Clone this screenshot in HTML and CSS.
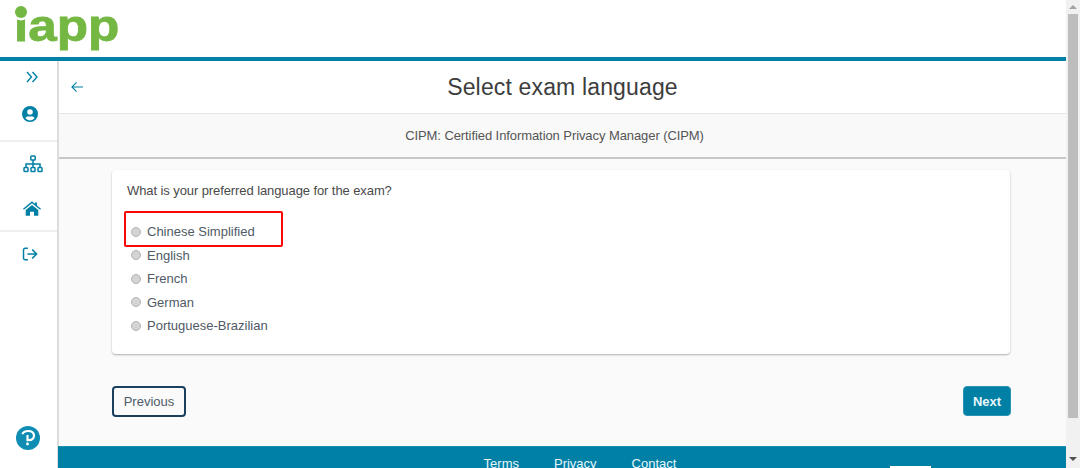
FILE: index.html
```html
<!DOCTYPE html>
<html lang="en">
<head>
<meta charset="utf-8">
<title>Select exam language</title>
<link rel="stylesheet" href="styles.css">
</head>
<body>
<div class="page">
  <header class="topbar">
    <div class="logo"><span class="logo-text">iapp</span><span class="logo-dot"></span></div>
  </header>
  <div class="main">
    <nav class="sidebar">
      <div class="nav-group nav-first">
        <svg class="ico chev" viewBox="0 0 12 12"><path d="M1 1l4.500 5L1 11M6.500 1l4.500 5-4.500 5" fill="none" stroke="currentColor" stroke-width="1.400"/></svg>
        <svg class="ico user" viewBox="0 0 16 16"><path fill-rule="evenodd" d="M8 0a8 8 0 1 1 0 16A8 8 0 0 1 8 0zm0 3.200a2.800 2.800 0 1 0 0 5.600 2.800 2.800 0 0 0 0-5.600zM3.400 12.300A5.800 5.800 0 0 0 8 14.400a5.800 5.800 0 0 0 4.600-2.100c-.6-1.300-1.700-2-3-2-.5 0-.9.300-1.600.3s-1.100-.3-1.600-.3c-1.300 0-2.400.7-3 2z" fill="currentColor"/></svg>
      </div>
      <div class="nav-group nav-second">
        <svg class="ico org" viewBox="0 0 20 18"><g fill="none" stroke="currentColor" stroke-width="1.500"><rect x="7.800" y="1" width="4.400" height="4" rx=".8"/><rect x="1" y="12.500" width="4" height="4" rx=".8"/><rect x="8" y="12.500" width="4" height="4" rx=".8"/><rect x="15" y="12.500" width="4" height="4" rx=".8"/><path d="M10 5v7.500M3 12.500V9h14v3.500"/></g></svg>
        <svg class="ico home" viewBox="0 0 20 16"><path d="M10 0l3.200 2.700V1.200h2.300v3.400L20 8.200l-1 1.200-9-7.300-9 7.300-1-1.200zM3 9.600L10 4l7 5.600V16h-4.800v-4.500H7.800V16H3z" fill="currentColor"/></svg>
      </div>
      <div class="nav-group nav-third">
        <svg class="ico exit" viewBox="0 0 18 16"><g fill="none" stroke="currentColor" stroke-width="1.700"><path d="M6 1.500H2.800A1.800 1.800 0 0 0 1 3.300v9.400a1.800 1.800 0 0 0 1.800 1.800H6"/><path d="M5.500 8H16M11 3l5 5-5 5"/></g></svg>
      </div>
      <svg class="pearson" viewBox="0 0 24 24"><circle cx="12" cy="12" r="12" fill="#0f8db3"/><path d="M6.300 8.200C7.200 6 9.300 5 12 5c3.800 0 6 1.900 6 4.600s-2.200 4.500-4.800 4.500h-1.700V9" fill="none" stroke="#fff" stroke-width="2.200"/><circle cx="11.500" cy="18" r="1.400" fill="#fff"/></svg>
    </nav>
    <div class="content">
      <div class="title-row">
        <svg class="back" viewBox="0 0 14 12"><path d="M13 6H1.500M6 1L1 6l5 5" fill="none" stroke="currentColor" stroke-width="1.200"/></svg>
        <h1>Select exam language</h1>
      </div>
      <div class="subtitle-row">CIPM: Certified Information Privacy Manager (CIPM)</div>
      <div class="body-area">
        <section class="card">
          <p class="question">What is your preferred language for the exam?</p>
          <div class="options">
            <label class="option option-marked"><input type="radio" name="lang"><span>Chinese Simplified</span><i class="mark"></i></label>
            <label class="option"><input type="radio" name="lang"><span>English</span></label>
            <label class="option"><input type="radio" name="lang"><span>French</span></label>
            <label class="option"><input type="radio" name="lang"><span>German</span></label>
            <label class="option"><input type="radio" name="lang"><span>Portuguese-Brazilian</span></label>
          </div>
        </section>
        <div class="actions">
          <button class="btn btn-prev" type="button">Previous</button>
          <button class="btn btn-next" type="button">Next</button>
        </div>
      </div>
      <footer class="footer">
        <a>Terms</a><a>Privacy</a><a>Contact</a>
        <span class="foot-badge"></span>
      </footer>
    </div>
  </div>
</div>
<div class="scrollbar">
  <span class="arrow arrow-up"></span>
  <span class="thumb"></span>
  <span class="arrow arrow-down"></span>
</div>
</body>
</html>
```

FILE: styles.css
```css
* { box-sizing: border-box; }
html, body { margin: 0; height: 468px; overflow: hidden; }
body { display: flex; font-family: "Liberation Sans", Arial, sans-serif; color: #4a4a4a; background: #fff; }
.page { flex: 1; min-width: 0; height: 468px; overflow: hidden; display: flex; flex-direction: column; }

.topbar { height: 61px; flex: none; border-bottom: 4px solid #0080a5; background: #fff; }
.logo { position: relative; width: 125px; height: 57px; padding-left: 14px; }
.logo-text { display: block; font-size: 45px; line-height: 52px; font-weight: 700; color: #74b843; -webkit-text-stroke: .8px #74b843; transform: scaleX(1.14); transform-origin: left; }
.logo-dot { position: absolute; left: 14.500px; top: 6px; width: 12px; height: 12px; border-radius: 50%; background: #74b843; box-shadow: 0 0 0 2.500px #fff; }

.main { flex: none; height: 407px; display: flex; }
.sidebar { width: 58px; flex: none; border-right: 1px solid #dcdcdc; display: flex; flex-direction: column; background: #fff; color: #0080a5; }
.nav-group { display: flex; flex-direction: column; align-items: center; border-bottom: 2px solid #efefef; }
.nav-first { height: 81px; padding-top: 10px; }
.nav-second { height: 90px; padding-top: 13px; }
.nav-third { border-bottom: 0; padding-top: 15px; }
.ico { display: block; color: #0080a5; flex: none; }
.chev { width: 12px; height: 12px; margin-left: 6px; }
.user { width: 16px; height: 16px; margin-top: 23px; margin-left: 2px; }
.org { width: 20px; height: 18px; margin-left: 8px; }
.home { width: 18px; height: 15px; margin-top: 28px; margin-left: 6px; }
.exit { width: 17px; height: 14px; margin-left: 4px; }
.pearson { margin-top: auto; margin-bottom: 18px; margin-left: 16px; width: 24px; height: 24px; flex: none; display: block; }

.content { flex: 1; min-width: 0; display: flex; flex-direction: column; border-left: 1px solid #dcdcdc; }
.title-row { height: 53px; flex: none; display: flex; align-items: center; justify-content: center; position: relative; background: #fff; border-bottom: 1px solid #e6e6e6; }
.title-row h1 { margin: 0; font-size: 23px; letter-spacing: .15px; font-weight: 400; color: #3d3d3d; }
.back { position: absolute; left: 12px; top: 20px; width: 13px; height: 12px; color: #0080a5; }
.subtitle-row { height: 45px; flex: none; display: flex; align-items: center; justify-content: center; padding-right: 16px; background: #f9f9f9; border-bottom: 2px solid #c8c8c8; font-size: 13px; letter-spacing: -.08px; color: #555; }
.body-area { height: 287px; flex: none; padding: 11px 55px 0 53px; background: #fafafa; }
.card { height: 184px; margin-right: 1px; background: #fff; border-radius: 4px; box-shadow: 0 1px 2px rgba(0,0,0,.3); padding: 13px 15px 0; }
.question { margin: 0; font-size: 13px; letter-spacing: -.09px; line-height: 16px; color: #4a4a4a; }
.options { margin-top: 21px; display: flex; flex-direction: column; }
.option { position: relative; height: 23.500px; display: flex; align-items: center; font-size: 13px; color: #4f5a66; }
.option input { appearance: none; margin: 0 6px 0 4px; width: 10px; height: 10px; border-radius: 50%; background: #d4d4d4; border: 1px solid #b4b4b4; flex: none; }
.mark { position: absolute; left: -3px; top: -9px; width: 159px; height: 36px; border: 2px solid #f80808; border-radius: 2px; pointer-events: none; }
.actions { margin-top: 32px; display: flex; justify-content: space-between; align-items: flex-start; }
.btn { font: 13px "Liberation Sans", Arial, sans-serif; border-radius: 4px; }
.btn-prev { width: 74px; height: 31px; background: #fafafa; border: 2px solid #1a4060; color: #4f5a66; }
.btn-next { width: 48px; height: 30px; background: #0080a5; border: 1px solid #2a94b5; color: #e8f6fb; font-weight: 700; }
.footer { flex: 1; margin-left: -1px; background: #0080a5; border-top: 1px solid #1a8fb0; position: relative; display: flex; justify-content: center; gap: 35px; padding: 9px 0 0 36px; font-size: 13px; color: #e8f6fb; }
.foot-badge { position: absolute; left: 832px; top: 19px; width: 41px; height: 4px; background: #fff; }

.scrollbar { width: 14px; flex: none; height: 468px; background: #f1f1f1; display: flex; flex-direction: column; align-items: center; }
.arrow { width: 0; height: 0; border-left: 4px solid transparent; border-right: 4px solid transparent; flex: none; }
.arrow-up { margin-top: 5px; border-bottom: 4px solid #a3a3a3; }
.arrow-down { margin-top: 39px; border-top: 4px solid #505050; }
.thumb { width: 10px; height: 404px; margin-top: 5px; background: #bdbdbd; flex: none; }
```
